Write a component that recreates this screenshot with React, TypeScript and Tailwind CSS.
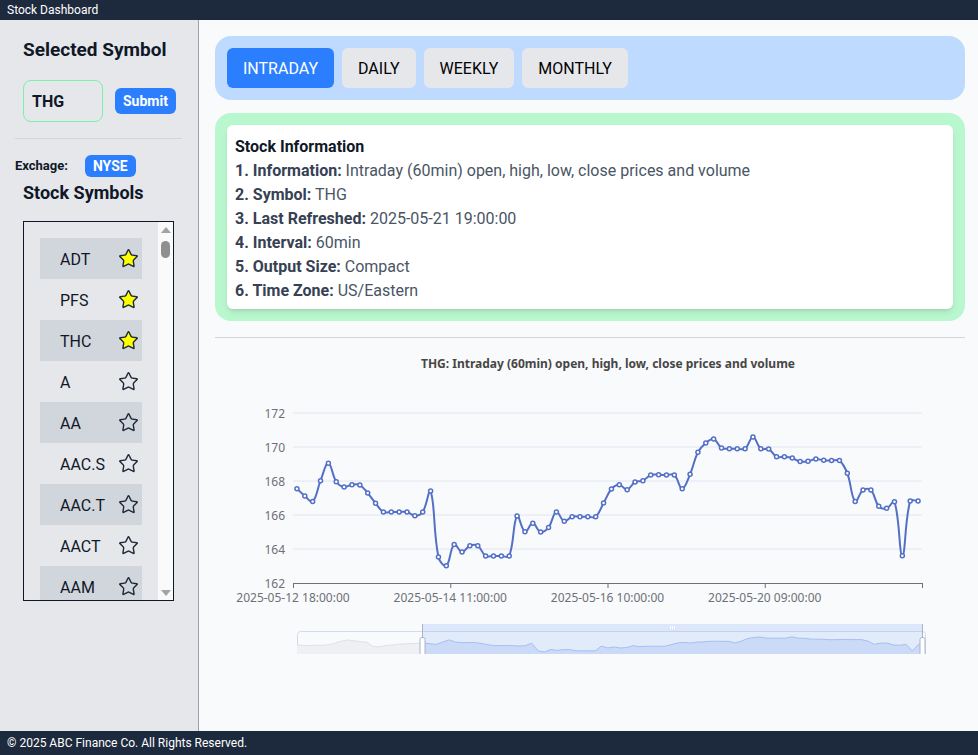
import { useState } from 'react';
import { Star } from 'lucide-react';

const SYMBOLS = [
  'ADT', 'PFS', 'THC', 'A', 'AA', 'AAC.S', 'AAC.T', 'AACT', 'AAM', 'AAN', 'AAP', 'AAT', 'AB',
  'ABBV', 'ABEV', 'ABG', 'ABM', 'ABR', 'ABT', 'AC', 'ACA', 'ACCO', 'ACEL', 'ACHR', 'ACI', 'ACM',
  'ACN', 'ACP', 'ACR', 'ACRE', 'ACV', 'ADC', 'ADM', 'ADNT', 'ADX', 'AEE', 'AEG', 'AEM', 'AEO',
  'AEP', 'AER', 'AES', 'AFG', 'AFL', 'AG', 'AGCO', 'AGD', 'AGI', 'AGL', 'AGM', 'AGO', 'AGR',
];

const TABS = ['INTRADAY', 'DAILY', 'WEEKLY', 'MONTHLY'];

// closing prices shown in the chart (80 hourly points)
const PRICES = [
  167.55, 167.12, 166.8, 168.02, 169.04, 167.96, 167.65, 167.78, 167.76, 167.29,
  166.69, 166.18, 166.18, 166.18, 166.18, 165.96, 166.18, 167.41, 163.53, 163.02,
  164.27, 163.82, 164.19, 164.19, 163.59, 163.59, 163.59, 163.59, 165.94, 165.02,
  165.51, 165.0, 165.27, 166.18, 165.63, 165.9, 165.9, 165.9, 165.9, 166.7,
  167.53, 167.78, 167.49, 167.94, 168.02, 168.35, 168.37, 168.35, 168.35, 167.55,
  168.39, 169.69, 170.24, 170.47, 169.94, 169.9, 169.9, 169.9, 170.59, 169.9,
  169.88, 169.43, 169.43, 169.35, 169.14, 169.16, 169.29, 169.22, 169.2, 169.2,
  168.45, 166.8, 167.47, 167.47, 166.51, 166.39, 166.78, 163.61, 166.82, 166.82,
];

// earlier points that only show up in the zoom slider
const EARLIER = [
  166.5, 166.3, 166.2, 166.4, 166.3, 166.6, 167.4, 168.4, 169.0, 168.6,
  168.2, 167.9, 165.8, 165.6, 166.2, 166.5, 166.9, 167.1, 167.2, 167.3,
];

const LABELS = ['2025-05-12 18:00:00', '2025-05-14 11:00:00', '2025-05-16 10:00:00', '2025-05-20 09:00:00'];

type Pt = [number, number];

const smoothPath = (pts: Pt[], smooth = 0.4) => {
  const cps = pts.map((p, i) => {
    const prev = pts[i - 1] ?? p;
    const next = pts[i + 1] ?? p;
    const vx = next[0] - prev[0];
    const vy = next[1] - prev[1];
    const d0 = Math.hypot(p[0] - prev[0], p[1] - prev[1]);
    const d1 = Math.hypot(next[0] - p[0], next[1] - p[1]);
    const r = d0 + d1 === 0 ? 0.5 : d1 / (d0 + d1);
    return {
      in: [p[0] - vx * smooth * (1 - r), p[1] - vy * smooth * (1 - r)],
      out: [p[0] + vx * smooth * r, p[1] + vy * smooth * r],
    };
  });
  let d = `M${pts[0][0]},${pts[0][1]}`;
  for (let i = 1; i < pts.length; i++) {
    d += ` C${cps[i - 1].out.join(',')} ${cps[i].in.join(',')} ${pts[i].join(',')}`;
  }
  return d;
};

const PriceChart = () => {
  const left = 293;
  const right = 922;
  const band = (right - left) / PRICES.length;
  const yOf = (v: number) => 584 - (v - 162) * 17;
  const pts: Pt[] = PRICES.map((v, i) => [left + (i + 0.5) * band, yOf(v)]);

  // data shadow for the slider
  const all = [...EARLIER, ...PRICES];
  const sx0 = 297;
  const sx1 = 925;
  const step = (sx1 - sx0) / (all.length - 1);
  const sy = (v: number) => 638 + (170.5 - v) * 2;
  const shadow: Pt[] = all.map((v, i) => [sx0 + i * step, sy(v)]);
  const cut = EARLIER.length;
  const toLine = (p: Pt[]) => p.map((q) => q.join(',')).join(' ');
  const area = (p: Pt[]) => `${toLine(p)} ${p[p.length - 1][0]},662 ${p[0][0]},662`;
  const earlyPts = shadow.slice(0, cut + 1);
  const latePts = shadow.slice(cut);
  const font = "'Noto Sans', sans-serif";

  return (
    <svg width={750} height={316} viewBox="215 339 750 316" className="block">
      <text x={608} y={364} textAnchor="middle" dominantBaseline="central" fontSize={12} fontWeight={700} fill="#464646" fontFamily={font}>
        THG: Intraday (60min) open, high, low, close prices and volume
      </text>

      {[172, 170, 168, 166, 164].map((v) => (
        <line key={v} x1={left} x2={right} y1={yOf(v)} y2={yOf(v)} stroke="#e0e6f1" strokeWidth={1} />
      ))}
      {[172, 170, 168, 166, 164, 162].map((v) => (
        <text key={v} x={285} y={yOf(v)} textAnchor="end" dominantBaseline="central" fontSize={12} fill="#6e7079" fontFamily={font}>
          {v}
        </text>
      ))}
      <line x1={left} x2={right} y1={584.5} y2={584.5} stroke="#6e7079" strokeWidth={1} />
      {[0, 20, 40, 60, 80].map((k) => (
        <line key={k} x1={left + k * band + 0.5} x2={left + k * band + 0.5} y1={584} y2={589} stroke="#6e7079" />
      ))}
      {LABELS.map((l, k) => (
        <text key={l} x={left + k * 20 * band} y={598} textAnchor="middle" dominantBaseline="central" fontSize={12} fill="#6e7079" fontFamily={font}>
          {l}
        </text>
      ))}

      <path d={smoothPath(pts)} fill="none" stroke="#5470c6" strokeWidth={2} strokeLinejoin="round" />
      {pts.map((p, i) => (
        <circle key={i} cx={p[0]} cy={p[1]} r={2} fill="#fff" stroke="#5470c6" strokeWidth={1.5} />
      ))}

      {/* zoom slider */}
      <rect x={sx0 + 0.5} y={632.5} width={sx1 - sx0} height={40} rx={3} fill="none" stroke="#d2dbee" />
      <polygon points={area(earlyPts)} fill="#eef0f4" />
      <polyline points={toLine(earlyPts)} fill="none" stroke="#dde1ea" strokeWidth={1} />
      <rect x={422} y={632} width={500} height={40} fill="#87affa" fillOpacity={0.2} />
      <polygon points={area(latePts)} fill="#aec5f5" fillOpacity={0.45} />
      <polyline points={toLine(latePts)} fill="none" stroke="#a6bff2" strokeWidth={1} />
      <rect x={422} y={625} width={500} height={7} fill="#87affa" fillOpacity={0.25} />
      {[-2, 0, 2].map((o) => (
        <line key={o} x1={672 + o + 0.5} x2={672 + o + 0.5} y1={627} y2={630} stroke="#fff" />
      ))}
      {[422, 922].map((x) => (
        <g key={x}>
          <line x1={x + 0.5} x2={x + 0.5} y1={625} y2={640} stroke="#aab4cb" />
          <rect x={x - 2} y={638.5} width={5} height={24} rx={2} fill="#fff" stroke="#aab4cb" />
        </g>
      ))}
    </svg>
  );
};

export default function App() {
  const [tab, setTab] = useState('INTRADAY');
  const [favs, setFavs] = useState<string[]>(['ADT', 'PFS', 'THC']);

  const toggleFav = (s: string) =>
    setFavs((prev) => (prev.includes(s) ? prev.filter((x) => x !== s) : [...prev, s]));

  return (
    <div className="h-screen flex flex-col overflow-hidden font-['Roboto',sans-serif] text-gray-900">
      <div className="h-5 shrink-0 bg-slate-800 text-white text-xs leading-5 px-[7px]">Stock Dashboard</div>

      <div className="flex-1 min-h-0 flex">
        {/* sidebar */}
        <div className="w-[199px] shrink-0 bg-gray-200 border-r border-gray-400 pt-4 pl-[15px] pr-4">
          <h2 className="ml-2 text-[19px] leading-7 font-bold whitespace-nowrap">Selected Symbol</h2>
          <div className="mt-4 ml-2 flex items-center gap-3">
            <input
              defaultValue="THG"
              className="w-20 h-[42px] border border-green-300 rounded-lg pl-2 font-bold text-base outline-none"
            />
            <button className="bg-blue-500 text-white font-bold text-sm leading-5 px-2 py-[3px] rounded-md">
              Submit
            </button>
          </div>
          <div className="mt-4 border-t border-gray-300" />
          <div className="mt-4 flex items-center gap-[17px]">
            <span className="text-[13px] font-bold">Exchage:</span>
            <span className="bg-blue-500 text-white font-bold text-sm leading-5 px-2 py-[1px] rounded-md">NYSE</span>
          </div>
          <h3 className="mt-[2px] ml-2 text-lg leading-7 font-bold whitespace-nowrap">Stock Symbols</h3>
          <div className="mt-[14px] ml-2 w-[151px] h-[380px] border border-gray-900 flex">
            <div className="flex-1 min-w-0 overflow-hidden">
              <ul className="px-4 py-4">
                {SYMBOLS.map((s, i) => (
                  <li
                    key={s}
                    className={`h-[41px] flex items-center justify-between pl-5 pr-[3px] text-base ${i % 2 === 0 ? 'bg-gray-300' : ''}`}
                  >
                    <span className="pt-[2px]">{s}</span>
                    <Star
                      size={21}
                      strokeWidth={1.6}
                      className="text-gray-800 cursor-pointer"
                      fill={favs.includes(s) ? 'yellow' : 'none'}
                      onClick={() => toggleFav(s)}
                    />
                  </li>
                ))}
              </ul>
            </div>
            {/* scrollbar */}
            <div className="w-[15px] shrink-0 bg-[#fafafa] flex flex-col items-center pt-[5px] pb-[4px]">
              <div className="w-0 h-0 border-x-[5px] border-x-transparent border-b-[6px] border-b-[#a3a3a3]" />
              <div className="mt-[8px] w-[9px] h-[17px] rounded-full bg-[#8f8f8f]" />
              <div className="mt-auto w-0 h-0 border-x-[5px] border-x-transparent border-t-[6px] border-t-[#a3a3a3]" />
            </div>
          </div>
        </div>

        {/* main */}
        <div className="flex-1 min-w-0 bg-gray-50 pt-4 pl-4 pr-[13px] overflow-hidden">
          <div className="bg-blue-200 rounded-2xl p-3 flex gap-2">
            {TABS.map((t) => (
              <button
                key={t}
                onClick={() => setTab(t)}
                className={`h-10 px-4 pt-[2px] rounded-md text-base ${tab === t ? 'bg-blue-500 text-white' : 'bg-gray-200 text-black'}`}
              >
                {t}
              </button>
            ))}
          </div>

          <div className="mt-[13px] bg-green-200 rounded-2xl p-3">
            <div className="bg-white rounded-md shadow-md pt-[10px] pb-[6px] px-2 text-base leading-6 text-gray-600">
              <p className="font-bold text-gray-900">Stock Information</p>
              <p><b className="text-gray-700">1. Information:</b> Intraday (60min) open, high, low, close prices and volume</p>
              <p><b className="text-gray-700">2. Symbol:</b> THG</p>
              <p><b className="text-gray-700">3. Last Refreshed:</b> 2025-05-21 19:00:00</p>
              <p><b className="text-gray-700">4. Interval:</b> 60min</p>
              <p><b className="text-gray-700">5. Output Size:</b> Compact</p>
              <p><b className="text-gray-700">6. Time Zone:</b> US/Eastern</p>
            </div>
          </div>

          <div className="mt-4 border-t border-gray-300" />
          <div className="h-[316px] overflow-hidden">
            <PriceChart />
          </div>
        </div>
      </div>

      <div className="h-6 shrink-0 bg-slate-800 text-white text-xs leading-6 px-[7px]">
        © 2025 ABC Finance Co. All Rights Reserved.
      </div>
    </div>
  );
}
